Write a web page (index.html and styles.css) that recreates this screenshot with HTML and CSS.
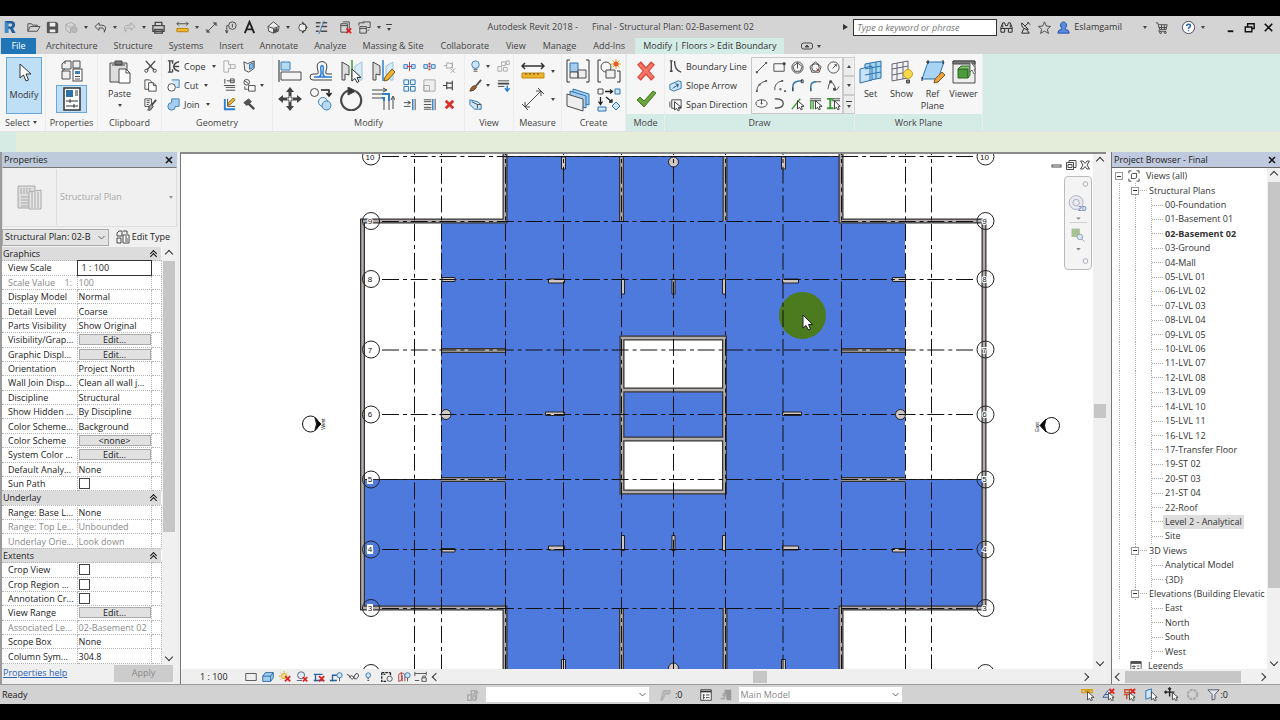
FILE: index.html
```html
<!DOCTYPE html>
<html lang="en">
<head>
<meta charset="utf-8">
<title>Autodesk Revit 2018 - Final - Structural Plan: 02-Basement 02</title>
<link rel="stylesheet" href="styles.css">
</head>
<body>
<div class="app">
<header class="titlebar">
  <svg class="logo" viewBox="0 0 14 16"><path d="M1 1h7q5 0 5 4.500q0 3-2.500 4L13.500 15H9.500L7 10H5v5H1z" fill="#1e5f9e"/><path d="M5 4h3q1.500 0 1.500 1.700T8 7.500H5z" fill="#d4d4d4"/><path d="M1 1l4 3v11H1z" fill="#3f8ccc"/></svg>
  <div class="qat">
    <button class="c" aria-label="Open"><svg viewBox="0 0 16 16"><path d="M2 12V4h4l1 1.500h5V7M2 12l2.500-5H15l-3 5z"/></svg></button>
    <button class="c" aria-label="Save"><svg viewBox="0 0 16 16"><path d="M3 2.500h9l1.500 1.500v9.500h-11v-11z" fill="#555"/><path d="M5 3h6v4H5zM5 10h6v3H5z" fill="#eee" stroke="none"/></svg></button>
    <button class="c dim" aria-label="Synchronize"><svg viewBox="0 0 16 16"><path d="M2 5l5-2.500L12 5v3M2 5v6l5 3V8L2 5M7 8l5-3"/><circle cx="11" cy="10.500" r="3" fill="#bbb"/></svg></button>
    <i class="arr"></i>
    <button class="c" aria-label="Undo"><svg viewBox="0 0 16 16"><path d="M6.500 3L2 7l4.500 4V8.500h3q3 0 2.500 4.500q4-7-2.500-7.500h-3z"/></svg></button><i class="arr"></i>
    <button class="c dim" aria-label="Redo"><svg viewBox="0 0 16 16"><path d="M9.500 3L14 7l-4.500 4V8.500h-3q-3 0-2.500 4.500q-4-7 2.500-7.500h3z"/></svg></button><i class="arr"></i>
    <button class="c" aria-label="Print"><svg viewBox="0 0 16 16"><path d="M4.500 6V2.500h7V6M2 6h12v6H2zM4 10h8v4H4z" stroke-width="1.500"/></svg></button>
    <i class="sep"></i>
    <button class="c" aria-label="Measure"><svg viewBox="0 0 16 16"><path d="M2 4h12M4 2L2 4l2 2M12 2l2 2-2 2"/><path d="M2 9h12v3.500H2z" fill="#f0b429" stroke="#b98514"/></svg></button><i class="arr"></i>
    <button class="c" aria-label="Aligned dimension"><svg viewBox="0 0 16 16"><path d="M3 13L13 3M2 10l4 4M10 2l4 4M3 13l3-.5M3 13l.5-3M13 3l-3 .5M13 3l-.5 3"/></svg></button>
    <button class="c" aria-label="Tag"><svg viewBox="0 0 16 16"><circle cx="10" cy="6" r="4"/><path d="M6 6H4v8M2.500 11L4 14l1.500-3M10 4v4"/></svg></button>
    <button class="c" aria-label="Text"><svg viewBox="0 0 16 16"><path d="M3 14L8 2l5 12M5 10h6" stroke="#222" stroke-width="2"/></svg></button>
    <i class="sep"></i>
    <button class="c" aria-label="3D view"><svg viewBox="0 0 16 16"><path d="M2 7l6-5 6 5-1 5-5 2-5-2zM2 7l6 2 6-2M8 9v5" fill="#eee"/><path d="M9 10l3-1v3l-3 1z" fill="#555"/></svg></button><i class="arr"></i>
    <button class="c" aria-label="Section"><svg viewBox="0 0 16 16"><circle cx="8" cy="8" r="4" fill="#eee"/><path d="M8 2l5 6-5 6V12a4 4 0 0 0 0-8z" fill="#333"/></svg></button>
    <button class="c" aria-label="Thin lines"><svg viewBox="0 0 16 16"><path d="M2 3h5M9 3h5M2 7h4M8 7h6M2 12h3M7 12h7" stroke-width="1.500"/><path d="M11 1L5 15" stroke="#3d7dc8"/></svg></button>
    <i class="sep"></i>
    <button class="c" aria-label="Close hidden"><svg viewBox="0 0 16 16"><path d="M5 2h7v9M3 4h7v9H3zM3 6h7"/><path d="M9 9l5 5M14 9l-5 5" stroke="#d22" stroke-width="2"/></svg></button>
    <button class="c" aria-label="Switch windows"><svg viewBox="0 0 16 16"><path d="M2 6V3h6M6 2h8v6h-3M3 7h7v7H3zM3 9h7M11 12l2-2"/></svg></button><i class="arr"></i>
    <i class="arr bar"></i>
  </div>
  <div class="doc"><span>Autodesk Revit 2018 -</span><span>Final - Structural Plan: 02-Basement 02</span></div>
  <div class="info">
    <i class="play"></i>
    <input class="search" type="text" placeholder="Type a keyword or phrase" aria-label="Search">
    <button class="c" aria-label="Find"><svg viewBox="0 0 16 16"><path d="M2 8l2-5h2l1 3h2l1-3h2l2 5v5h-4V9H6v4H2zM2 9h4M10 9h4M4 5v3M12 5v3" stroke="#222"/></svg></button>
    <button class="c" aria-label="Communication"><svg viewBox="0 0 16 16"><path d="M4 3q-1 7 7 7zM7.500 6.500l4-4M10 2l3 3M6 9.500L4 14h8l-3-4" stroke="#222"/></svg></button>
    <button class="c" aria-label="Favorites"><svg viewBox="0 0 16 16"><path d="M8 2l2 4.500 4.500.3-3.500 3 1.200 4.500L8 11.800l-4.200 2.500L5 9.800l-3.500-3L6 6.500z"/></svg></button>
    <button class="c user" aria-label="Account"><svg viewBox="0 0 16 16"><path d="M2 14q0-4 4-4V9Q4 6 5 4q3-4 6 0 1 2-1 5v1q4 0 4 4z" fill="#5a8ae0" stroke="#1f4fa8"/></svg></button>
    <button class="name">Eslamgamil</button><i class="arr"></i>
    <button class="c cart" aria-label="Store"><svg viewBox="0 0 16 16"><path d="M2 3h2l2 7h7l1-5H5M8 5v5M11 5v5M5 8h8M6 10l-1 2h8"/><circle cx="7" cy="13.500" r="1"/><circle cx="12" cy="13.500" r="1"/></svg></button>
    <i class="sep"></i>
    <button class="c" aria-label="Help"><svg viewBox="0 0 16 16"><circle cx="8" cy="8" r="6.500" fill="#fff" stroke="#445"/><path d="M6 6.500Q6 4.500 8 4.500t2 1.800q0 1-1.500 1.700L8 9.500M8 11v1" stroke="#1d62b8" stroke-width="1.500"/></svg></button><i class="arr"></i>
    <span class="winbtns">
      <button class="c" aria-label="Minimize"><svg viewBox="0 0 16 16"><path d="M5 12h6" stroke="#111" stroke-width="2"/></svg></button>
      <button class="c" aria-label="Restore"><svg viewBox="0 0 16 16"><path d="M6 7V4h7v5h-2M3.500 7.500h7v5h-7z" stroke="#111" stroke-width="1.500"/></svg></button>
      <button class="c" aria-label="Close"><svg viewBox="0 0 16 16"><path d="M4 4l8 8M12 4l-8 8" stroke="#111" stroke-width="1.700"/></svg></button>
    </span>
  </div>
</header>

<nav class="tabs">
  <button class="file">File</button><button>Architecture</button><button>Structure</button><button>Systems</button><button>Insert</button><button>Annotate</button><button>Analyze</button><button>Massing &amp; Site</button><button class="wide">Collaborate</button><button>View</button><button class="wide">Manage</button><button>Add-Ins</button><button class="active">Modify | Floors &gt; Edit Boundary</button>
  <button class="toggle" aria-label="Minimize ribbon"><svg viewBox="0 0 14 8"><rect x="1.500" y="1" width="11" height="6" rx="2"/><path d="M5 5l2-2 2 2z" fill="#444"/></svg><i class="arr"></i></button>
</nav>

<section class="ribbon">
  <div class="panel p-select">
    <div class="body"><button class="tall on"><svg class="i24" viewBox="0 0 24 24"><path d="M8 3v14l3.500-3 2.500 6 2.500-1-2.500-6H19z" fill="#fff" stroke="#333"/></svg><span>Modify</span></button></div>
    <div class="cap">Select <i class="arr"></i></div>
  </div>
  <div class="panel p-prop">
    <div class="body two">
      <button class="big" aria-label="Type properties"><svg class="i24" viewBox="0 0 24 24"><path d="M2 5l3-3h6v8H2zM13 2h7v7h-7zM5 2v3M2 12h8v8H2zM2 12l3-2" fill="#eee"/><rect x="13" y="10" width="9" height="12" fill="#fff"/><path d="M15 12h5v3h-5z" fill="#3d7fb8" stroke="none"/><path d="M15 17.500h5M15 20h5"/></svg></button>
      <button class="big on" aria-label="Properties"><svg class="i24" viewBox="0 0 24 24"><rect x="4" y="1" width="16" height="22" fill="#fff" stroke="#333" stroke-width="1.500"/><path d="M6 3h7v7H6z" fill="#2c72ad" stroke="none"/><path d="M15 4h3M15 6h3M15 8h3M6 14h12M10 12v4M6 19h12M14 17v4" stroke="#333"/></svg></button>
    </div>
    <div class="cap">Properties</div>
  </div>
  <div class="panel p-clip">
    <div class="body">
      <button class="tall"><svg class="i24" viewBox="0 0 24 24"><path d="M2 3h17v19H2z" fill="#ddd"/><path d="M7 1h7v4H7zM4 5h13" fill="#777"/><path d="M11 9h7l4 4v10H11z" fill="#fff"/><path d="M18 9v4h4"/></svg><span>Paste</span><i class="arr"></i></button>
      <div class="col">
        <button class="s" aria-label="Cut to clipboard"><svg viewBox="0 0 16 16"><path d="M3 2l9 10M13 2L4 12" stroke-width="1.500"/><circle cx="3.500" cy="12.500" r="1.700"/><circle cx="12.500" cy="12.500" r="1.700"/></svg></button>
        <button class="s" aria-label="Copy to clipboard"><svg viewBox="0 0 16 16"><path d="M2 2h5l2 2v8H2z"/><path d="M6 5h5l3 3v6H6z" fill="#fff"/><path d="M11 5v3h3"/></svg></button>
        <button class="s" aria-label="Match type"><svg viewBox="0 0 16 16"><path d="M2 2h7v8H2zM4 4h3M4 6h3M4 8h2"/><path d="M14 3L9 9" stroke-width="2"/><path d="M9 8l2 2-3 4-3 0q2-2 1-4z" fill="#999"/></svg></button>
      </div>
    </div>
    <div class="cap">Clipboard</div>
  </div>
  <div class="panel p-geo">
    <div class="body">
      <div class="col cmd">
        <button><svg viewBox="0 0 16 16"><path d="M2 2h6M2 14h5M4 2v12M7 2v3M7 11v3M14 3q-5 1-6 5 1 4 6 5M9 8h5" stroke-width="1.500"/></svg><span>Cope</span><i class="arr"></i></button>
        <button><svg viewBox="0 0 16 16"><path d="M6 2h8v8h-3" fill="#cfe6f8" stroke="#3d7fb8"/><circle cx="6" cy="10" r="4" fill="#fff"/></svg><span>Cut</span><i class="arr"></i></button>
        <button><svg viewBox="0 0 16 16"><path d="M6 2h8v8h-4a4 4 0 1 1-4-4z" fill="#a5cdf0" stroke="#3d7fb8"/></svg><span>Join</span><i class="arr"></i></button>
      </div>
      <div class="col">
        <button class="s dim" aria-label="Join roof"><svg viewBox="0 0 16 16"><path d="M2 2h5v4h7v4H7v4H2zM9 6v4"/></svg></button>
        <button class="s" aria-label="Beam joins"><svg viewBox="0 0 16 16"><path d="M3 1v5M5 3h8M9 1h4v4H9zM2 8h12M4 10h10M4 13h10" /></svg></button>
        <button class="s" aria-label="Wall joins"><svg viewBox="0 0 16 16"><path d="M3 2v11h11" stroke="#2c7fd0" stroke-width="2"/><path d="M6 2v8h8"/><path d="M6 9l1-3 5-5 2 2-5 5z" fill="#f0b429" stroke="#8a6a20"/></svg></button>
      </div>
      <div class="col w3">
        <button class="s" aria-label="Split face"><svg viewBox="0 0 16 16"><path d="M2 3l4 2 7-3v8l-6 4-4-2z" fill="#eee"/><path d="M8 6l4-2v5l-4 2z" fill="#8bbce8" stroke="#2c72ad"/></svg></button>
        <button class="s" aria-label="Paint"><svg viewBox="0 0 16 16"><circle cx="5" cy="4.500" r="3"/><path d="M3 3l4 3M7 8h7v6H7zM3 9v3h3"/></svg><i class="arr"></i></button>
        <button class="s" aria-label="Demolish"><svg viewBox="0 0 16 16"><path d="M7 7l6 6" stroke-width="2.500"/><path d="M2 6l5-4 3 3-5 4z" fill="#555"/></svg></button>
      </div>
    </div>
    <div class="cap">Geometry</div>
  </div>
  <div class="panel p-mod">
    <div class="body">
      <div class="grid4">
        <button class="big" aria-label="Align"><svg class="i24" viewBox="0 0 24 24"><path d="M1 1v22" stroke="#222"/><path d="M3 3h9v8H3z" fill="#b5dbf3" stroke="#3d7fb8"/><path d="M3 13h20v8H3z" fill="#f4f4f4"/></svg></button>
        <button class="big" aria-label="Offset"><svg class="i24" viewBox="0 0 24 24"><path d="M23 21H4q-3 0-3-3t3-3h4q2 0 1-3-3-9 4-9.500 7 .5 4 9.500-1 3 1 3h5" stroke="#444"/><path d="M23 18H5M8 18q5 0 4-6-1-5 1-5.500 2 .5 1 5.500-1 6 4 6" stroke="#2c7fd0" stroke-width="1.500"/></svg></button>
        <button class="big" aria-label="Mirror pick axis"><svg class="i24" viewBox="0 0 24 24"><path d="M2 3l7 4v9l-4-1v6H2z" fill="#ddd"/><path d="M22 3l-7 4v9l4-1v6h3z" fill="#d8ecf8" stroke="#9cc4dc"/><path d="M12 1v21" stroke="#3d9b35" stroke-width="1.500"/><path d="M12 10v12l3-2.500 2 4 2-1-2-4h4z" fill="#fff" stroke="#333"/></svg></button>
        <button class="big" aria-label="Mirror draw axis"><svg class="i24" viewBox="0 0 24 24"><path d="M2 3l7 4v9l-4-1v6H2z" fill="#ddd"/><path d="M22 3l-7 4v9l4-1v6h3z" fill="#d8ecf8" stroke="#9cc4dc"/><path d="M12 1v21" stroke="#2c7fd0" stroke-width="1.500"/><path d="M13 22l1-4 7-8 3 3-7 8z" fill="#f0b429" stroke="#7a5a20"/></svg></button>
        <button class="big" aria-label="Move"><svg class="i24" viewBox="0 0 24 24"><path d="M12 0l4 5h-2.500v4h-3V5H8zM12 24l4-5h-2.500v-4h-3v4H8zM0 12l5-4v2.500h4v3H5V16zM24 12l-5-4v2.500h-4v3h4V16z" fill="#444" stroke="none"/><path d="M10 10h4v4h-4z" fill="#fff"/></svg></button>
        <button class="big" aria-label="Copy"><svg class="i24" viewBox="0 0 24 24"><circle cx="5.500" cy="5.500" r="4"/><path d="M12 3h8v5M17.500 6l2.500 3 2.500-3" stroke="#222" stroke-width="1.500"/><circle cx="14" cy="15" r="4.500" fill="#e4f1fa" stroke="#3d7fb8"/><circle cx="17.500" cy="18.500" r="4.500" fill="#b5dbf3" stroke="#3d7fb8"/></svg></button>
        <button class="big" aria-label="Rotate"><svg class="i24" viewBox="0 0 24 24"><path d="M16 4.500A10 10 0 1 1 9 3.500" stroke-width="2.200"/><path d="M8 0l8 4-8 4z" fill="#333"/></svg></button>
        <button class="big" aria-label="Trim"><svg class="i24" viewBox="0 0 24 24"><path d="M1 3h14M12 1l4 2-4 2M22 22V10M20 13l2-4 2 4M1 7h10M1 11h10M13 23v-9M18 23v-9"/><path d="M11 7h7v7M11 11h2v3" stroke="#2c7fd0" stroke-width="2"/></svg></button>
      </div>
      <div class="grid3">
        <button class="s" aria-label="Split"><svg viewBox="0 0 16 16"><path d="M2 6h4v4H2zM10 6h4v4h-4z" fill="#cfe6f8" stroke="#2c7fd0"/><path d="M8 3v10M5 8h6" stroke="#c33"/></svg></button>
        <button class="s" aria-label="Split with gap"><svg viewBox="0 0 16 16"><path d="M2 6h4v4H2zM10 6h4v4h-4z" fill="#cfe6f8" stroke="#2c7fd0"/><path d="M8 4v2M8 7v2M8 10v2" stroke="#c33" stroke-width="2"/></svg></button>
        <button class="s dim" aria-label="Unpin"><svg viewBox="0 0 16 16"><path d="M2 7h3V4l6 1v4l-6 1V7M11 3v7M9 10l5 5M14 10l-5 5"/></svg></button>
        <button class="s" aria-label="Array"><svg viewBox="0 0 16 16"><path d="M2 2h5v5H2zM9 2h5v5H9zM2 9h5v5H2zM9 9h5v5H9z" fill="#e4f1fa" stroke="#2c72ad"/></svg></button>
        <button class="s dim" aria-label="Scale"><svg viewBox="0 0 16 16"><path d="M2 2h12v12H2zM2 8h6v6H2z" fill="#eee"/></svg></button>
        <button class="s" aria-label="Pin"><svg viewBox="0 0 16 16"><path d="M1 8h4M5 4v8M5 5.500h6v5H5M11 3v10" stroke-width="1.300"/></svg></button>
        <button class="s" aria-label="Trim single"><svg viewBox="0 0 16 16"><path d="M2 6h7M2 10h7M6 4l3 2-3 2M14 2v12"/><path d="M11.500 2v12" stroke="#2c7fd0" stroke-width="1.500"/></svg></button>
        <button class="s" aria-label="Trim multiple"><svg viewBox="0 0 16 16"><path d="M2 3h8M2 5h8M2 8h8M2 11h8M2 13h8M14 2v12"/><path d="M11.500 2v12" stroke="#2c7fd0" stroke-width="1.500"/></svg></button>
        <button class="s" aria-label="Delete"><svg viewBox="0 0 16 16"><path d="M4 4l8 8M12 4l-8 8" stroke="#d8302a" stroke-width="3"/></svg></button>
      </div>
    </div>
    <div class="cap">Modify</div>
  </div>
  <div class="panel p-view">
    <div class="body">
      <div class="col w28">
        <button class="s" aria-label="Hide"><svg viewBox="0 0 16 16"><circle cx="8" cy="6" r="4" fill="#cfe6f8" stroke="#3d7fb8"/><path d="M6 11h4M6 13h4"/></svg><i class="arr"></i></button>
        <button class="s" aria-label="Override"><svg viewBox="0 0 16 16"><path d="M14 2L8 9" stroke="#555" stroke-width="2"/><path d="M2 14q1-5 5-6l2 2q-2 4-7 4z" fill="#9a6232" stroke="#6b4020"/></svg><i class="arr"></i></button>
        <button class="s" aria-label="Selection box"><svg viewBox="0 0 16 16"><path d="M2 3l8 2 4 3v5l-7 0-5-5z" fill="#cfe6f8" stroke="#2c72ad"/><path d="M4 5l6 3v4M10 8l4 0"/></svg></button>
      </div>
      <div class="col">
        <button class="s dim" aria-label="Displace"><svg viewBox="0 0 16 16"><path d="M2 8h4v5H2zM8 9h4v4H8zM6 3h4v4H6zM11 2h3v4h-3z"/></svg></button>
        <button class="s" aria-label="Linework"><svg viewBox="0 0 16 16"><path d="M2 3h12"/><path d="M2 6h12" stroke-width="2"/><path d="M2 9h7" stroke-width="1"/><path d="M12 8v5M9.500 11l2.500 3 2.500-3" stroke="#2c7fd0" stroke-width="1.500"/></svg></button>
        <span></span>
      </div>
    </div>
    <div class="cap">View</div>
  </div>
  <div class="panel p-meas">
    <div class="body two">
      <button class="big" aria-label="Measure"><svg class="i24" viewBox="0 0 24 24"><path d="M1 7h22M4 4L1 7l3 3M20 4l3 3-3 3" stroke="#333" stroke-width="1.500"/><path d="M1 14h22v5H1z" fill="#f0b429" stroke="#c08a15"/><path d="M5 14v2M9 14v2M13 14v2M17 14v2"/></svg><i class="arr"></i></button>
      <button class="big" aria-label="Dimension"><svg class="i24" viewBox="0 0 24 24"><path d="M4 20L20 4M1 17l6 6M17 1l6 6M4 20v-5M4 20h5M20 4v5M20 4h-5"/></svg><i class="arr"></i></button>
    </div>
    <div class="cap">Measure</div>
  </div>
  <div class="panel p-create">
    <div class="body grid2">
      <button class="big" aria-label="Create assembly"><svg class="i24" viewBox="0 0 24 24"><path d="M4 1H1v22h3M20 1h3v22h-3" stroke="#333"/><path d="M4 4h8v9H4z" fill="#a5cdf0" stroke="#2c72ad"/><path d="M4 13h8v6H4zM12 11h8v8h-8z" fill="#eee"/></svg></button>
      <button class="big" aria-label="Create group"><svg class="i24" viewBox="0 0 24 24"><path d="M4 1H1v22h3M20 12h3v11h-3" stroke="#333"/><circle cx="9" cy="8" r="5"/><path d="M9 11h9v8H9z" fill="#eee"/><path d="M19 0v10M14 5h10M15.500 1.500l7 7M22.500 1.500l-7 7" stroke="#e8a020"/><circle cx="19" cy="5" r="2.500" fill="#e85a20" stroke="none"/></svg></button>
      <button class="big" aria-label="Create parts"><svg class="i24" viewBox="0 0 24 24"><path d="M7 1l16 5v11l-16-5z" fill="#a5cdf0" stroke="#2c72ad"/><path d="M4 3l16 5v12L4 15z" fill="#a5cdf0" stroke="#2c72ad"/><path d="M1 6l16 5v12L1 18z" fill="#eee"/></svg></button>
      <button class="big" aria-label="Create similar"><svg class="i24" viewBox="0 0 24 24"><path d="M1 1h5v5H1z"/><path d="M8 3.500h7M13 1.500l2.500 2-2.500 2M3.500 9v7M1.500 13.500l2 3 2-3M9 9l6 5M15 11v3h-3" stroke="#222" stroke-width="1.300"/><path d="M18 1h5v5h-5zM1 19h8v4H1zM19 14l4 4-4 4-4-4z" fill="#cfe6f8" stroke="#2c72ad"/></svg></button>
    </div>
    <div class="cap">Create</div>
  </div>
  <div class="panel p-mode ctx">
    <div class="body two">
      <button class="big" aria-label="Cancel edit mode"><svg class="i24" viewBox="0 0 24 24"><path d="M5 4l14 16M19 4L5 20" stroke="#d9402f" stroke-width="5"/><path d="M5.500 5l13 14M18.500 5l-13 14" stroke="#f4776a" stroke-width="3"/></svg></button>
      <button class="big" aria-label="Finish edit mode"><svg class="i24" viewBox="0 0 24 24"><path d="M3 13l3-3 4 4L19 4l3 2-12 14z" fill="#6aa53c" stroke="#3f7a22"/></svg></button>
    </div>
    <div class="cap">Mode</div>
  </div>
  <div class="panel p-draw ctx">
    <div class="body">
      <div class="col cmd">
        <button><svg viewBox="0 0 16 16"><path d="M2 2h3M3.500 2v11M2 13h3M7 2q0 10 7 12" stroke-width="1.500"/></svg><span>Boundary Line</span></button>
        <button><svg viewBox="0 0 16 16"><path d="M2 7l9-4 3 1v7l-8 3-4-2z" fill="#cfe6f8" stroke="#2c72ad"/><path d="M5 11l6-4M8 6l3 1-1 3" stroke="#174f80"/></svg><span>Slope Arrow</span></button>
        <button><svg viewBox="0 0 16 16"><path d="M4 3h10v9H4zM2 5v6"/><path d="M7 5v9l2-2 2 3 1-1-1-3h3z" fill="#fff" stroke="#333"/></svg><span>Span Direction</span></button>
      </div>
      <div class="gallery">
        <button aria-label="Line"><svg viewBox="0 0 16 16"><path d="M3 13L13 3"/><path d="M2 13h2M12 3h2" stroke-width="2"/></svg></button>
        <button aria-label="Rectangle"><svg viewBox="0 0 16 16"><path d="M2 4h11v8H2z"/><path d="M12 3h2v2h-2z" fill="#333"/></svg></button>
        <button aria-label="Inscribed polygon"><svg viewBox="0 0 16 16"><circle cx="8" cy="8" r="6"/><path d="M8 3l5 4-2 5H5L3 7zM8 3v6"/></svg></button>
        <button aria-label="Circumscribed polygon"><svg viewBox="0 0 16 16"><path d="M8 2l6 5-2 6H4L2 7z"/><circle cx="8" cy="8" r="4"/><path d="M9 9l3 3" stroke="#c33"/></svg></button>
        <button aria-label="Circle"><svg viewBox="0 0 16 16"><circle cx="8" cy="8" r="6"/><path d="M7 9l4-4M9 5h2v2"/></svg></button>
        <button aria-label="Start-end-radius arc"><svg viewBox="0 0 16 16"><path d="M3 14Q3 6 13 3"/><path d="M2 13h2v2H2zM12 2h2v2h-2zM5 6h2v2H5z" fill="#555" stroke="none"/></svg></button>
        <button aria-label="Center-ends arc"><svg viewBox="0 0 16 16"><path d="M3 13Q2 5 11 3"/><path d="M10 2h2v2h-2zM8 11h2v2H8zM13 13h2v2h-2z" fill="#555" stroke="none"/></svg></button>
        <button aria-label="Tangent arc"><svg viewBox="0 0 16 16"><path d="M3 14V9q0-6 10-6" stroke="#2c72ad" stroke-width="1.500"/><path d="M3 14v-4M12 2h2v3h-2z" stroke="#333"/></svg></button>
        <button aria-label="Fillet arc"><svg viewBox="0 0 16 16"><path d="M3 14V9q0-5 6-5" stroke="#2c72ad" stroke-width="1.500"/><path d="M9 4h5M3 14v-3"/></svg></button>
        <button aria-label="Spline"><svg viewBox="0 0 16 16"><path d="M2 12Q4 1 7 5t3 7 4-3"/><path d="M4 3h2v2H4zM8 11h2v2H8z" fill="#555"/></svg></button>
        <button aria-label="Ellipse"><svg viewBox="0 0 16 16"><ellipse cx="8" cy="8" rx="6" ry="4"/><path d="M8 4v5M7 8h2"/></svg></button>
        <button aria-label="Partial ellipse"><svg viewBox="0 0 16 16"><path d="M4 3q8 0 8 5t-9 5M3 3h3M3 13h2" stroke-width="1.300"/></svg></button>
        <button aria-label="Pick lines"><svg viewBox="0 0 16 16"><path d="M2 14L11 3" stroke="#3d9b35" stroke-width="1.500"/><path d="M8 5v9l2-2 2 3 1-1-1-3h3z" fill="#fff" stroke="#333"/></svg></button>
        <button aria-label="Pick walls"><svg viewBox="0 0 16 16"><path d="M2 3h12M2 5h12"/><path d="M3 5v9M5.500 5v9" stroke="#3d9b35" stroke-width="1.500"/><path d="M8 5v9l2-2 2 3 1-1-1-3h3z" fill="#fff" stroke="#333"/></svg></button>
        <button aria-label="Pick supports"><svg viewBox="0 0 16 16"><path d="M6 3h9M6 5h9"/><path d="M1 3h7M4.500 3v10M1 13h7" stroke="#3d9b35" stroke-width="2"/><path d="M9 5v9l2-2 2 3 1-1-1-3h2z" fill="#fff" stroke="#333"/></svg></button>
      </div>
      <div class="spin"><button aria-label="Up"><i class="arr up"></i></button><button aria-label="Down"><i class="arr"></i></button><button aria-label="More"><i class="arr bar"></i></button></div>
    </div>
    <div class="cap">Draw</div>
  </div>
  <div class="panel p-work ctx">
    <div class="body">
      <button class="tall"><svg class="i24" viewBox="0 0 24 24"><path d="M6 4l16-3v17L6 21z" fill="#a5d4ee" stroke="#2c72ad"/><path d="M1 9l12-3v14L1 23z" fill="#c7e3f5" stroke="#2c72ad"/><path d="M11 3v17M17 2v17M6 9l16-3M6 15l16-3" stroke="#2c72ad"/></svg><span>Set</span></button>
      <button class="tall"><svg class="i24" viewBox="0 0 24 24"><path d="M2 4l16-3v17L2 21zM7 3v17M13 2v17M2 9l16-3M2 15l16-3" fill="#f2f2f4" stroke="#667"/><circle cx="18" cy="14" r="4.500" fill="#f8d94a" stroke="#c9a020"/><path d="M16.500 20h3v3h-3z" fill="#888"/></svg><span>Show</span></button>
      <button class="tall"><svg class="i24" viewBox="0 0 24 24"><path d="M7 2h16l-6 17H1z" fill="#a9d3f2" stroke="#2c72ad"/><path d="M5 2h3M7 0v4M22 0v4M1 17v4" stroke="#222"/><path d="M13 23l1-4 7-7 3 3-7 7z" fill="#f0a040" stroke="#7a5a20"/></svg><span>Ref<br>Plane</span></button>
      <button class="tall"><svg class="i24" viewBox="0 0 24 24"><path d="M1 1h22v22H1z" fill="#eee"/><path d="M1 1h22v3H1z" fill="#777"/><path d="M6 9h10v9H6z" fill="#4b9a3a" stroke="#2e6a22"/><path d="M6 9l3-3h9v9l-2 3V9z" fill="#86c070" stroke="#2e6a22"/><path d="M18 1v11l2-2 2 4 1.500-1-1.500-4h2z" fill="#fff" stroke="#666"/></svg><span>Viewer</span></button>
    </div>
    <div class="cap">Work Plane</div>
  </div>
</section>
<div class="options"></div>

<main class="work">
  <aside class="props">
    <h2>Properties <button class="x" aria-label="Close properties"><svg viewBox="0 0 8 8"><path d="M1 1l6 6M7 1L1 7"/></svg></button></h2>
    <div class="ptype">
      <span class="thumb"><svg viewBox="0 0 26 26"><path d="M1 2h17v22H1z" fill="#ddd" stroke="#aaa"/><path d="M4 4v6M7 4v6M10 4v6M13 4v6M4 13h9M4 16h9M4 19h9M4 22h9" stroke="#aaa"/><path d="M12 8l12-2v19H12z" fill="#e6e6e6" stroke="#aaa"/><path d="M15 8v16M18 8v16M21 8v16" stroke="#aaa"/></svg></span>
      <span>Structural Plan</span><i class="arr"></i>
    </div>
    <div class="inst"><select aria-label="Instance"><option>Structural Plan: 02-B</option></select><button><svg viewBox="0 0 14 14"><path d="M1 3l2-2h3v5H1zM7 1h4v3M1 8h4v5H1z"/><path d="M7 5h6v8H7zM9 7h2M9 9h3M9 11h3" fill="#fff"/></svg>Edit Type</button></div>
    <div class="pbody">
      <table>
        <colgroup><col class="c1"><col class="c2"><col class="c3"></colgroup>
        <tr class="h"><th colspan="3">Graphics <b></b></th></tr>
        <tr><td>View Scale</td><td class="box">1 : 100</td><td></td></tr>
        <tr class="off"><td>Scale Value &nbsp;&nbsp; 1:</td><td>100</td><td></td></tr>
        <tr><td>Display Model</td><td>Normal</td><td></td></tr>
        <tr><td>Detail Level</td><td>Coarse</td><td></td></tr>
        <tr><td>Parts Visibility</td><td>Show Original</td><td></td></tr>
        <tr><td>Visibility/Grap...</td><td><button>Edit...</button></td><td></td></tr>
        <tr><td>Graphic Displ...</td><td><button>Edit...</button></td><td></td></tr>
        <tr><td>Orientation</td><td>Project North</td><td></td></tr>
        <tr><td>Wall Join Disp...</td><td>Clean all wall j...</td><td></td></tr>
        <tr><td>Discipline</td><td>Structural</td><td></td></tr>
        <tr><td>Show Hidden ...</td><td>By Discipline</td><td></td></tr>
        <tr><td>Color Scheme...</td><td>Background</td><td></td></tr>
        <tr><td>Color Scheme</td><td><button>&lt;none&gt;</button></td><td></td></tr>
        <tr><td>System Color ...</td><td><button>Edit...</button></td><td></td></tr>
        <tr><td>Default Analy...</td><td>None</td><td></td></tr>
        <tr><td><label for="sun">Sun Path</label></td><td><input type="checkbox" id="sun"></td><td></td></tr>
        <tr class="h"><th colspan="3">Underlay <b></b></th></tr>
        <tr><td>Range: Base L...</td><td>None</td><td></td></tr>
        <tr class="off"><td>Range: Top Le...</td><td>Unbounded</td><td></td></tr>
        <tr class="off"><td>Underlay Orie...</td><td>Look down</td><td></td></tr>
        <tr class="h"><th colspan="3">Extents <b></b></th></tr>
        <tr><td><label for="cv">Crop View</label></td><td><input type="checkbox" id="cv"></td><td></td></tr>
        <tr><td><label for="cr">Crop Region ...</label></td><td><input type="checkbox" id="cr"></td><td></td></tr>
        <tr><td><label for="ac">Annotation Cr...</label></td><td><input type="checkbox" id="ac"></td><td></td></tr>
        <tr><td>View Range</td><td><button>Edit...</button></td><td></td></tr>
        <tr class="off"><td>Associated Le...</td><td>02-Basement 02</td><td></td></tr>
        <tr><td>Scope Box</td><td>None</td><td></td></tr>
        <tr><td>Column Sym...</td><td>304.8</td><td></td></tr>
      </table>
      <div class="vs"><i class="ch u"></i><i class="thumbv t1"></i><i class="ch d"></i></div>
    </div>
    <div class="pfoot"><a href="#help">Properties help</a><button disabled>Apply</button></div>
  </aside>

  <section class="canvas">
    <div class="stage">
      <div class="view">
      <svg class="plan" viewBox="181 154 912 515" preserveAspectRatio="xMidYMid slice">
        <defs>
          <path id="walls" d="M505 150V221H362.500V608H505V680M841 150V221H984V608H841V680M621.500 157V221M725 157V221M621.500 608V680M725 608V680M441 350.500H505M441 479.500H505M841 350.500H905M841 479.500H905M622 338H724.500V492H622zM622 390H724.500M622 439H724.500"/>
          <g id="end"><circle r="8.500"/></g>
        </defs>
        <path fill="#4f7add" d="M505 157H841V221H905V479H983V608H841V680H505V608H363V479H441V221H505z"/>
        <path fill="#fff" d="M622 338H724V390H622zM622 439H724V492H622z"/>
        <path class="thin" d="M505 156.500H841M364 479.500H441M905 479.500H983"/>
        <circle cx="802.500" cy="315.500" r="23.500" fill="#4b7a1f"/>
        <use href="#walls" class="w1"/><use href="#walls" class="w2"/>
        <g class="cols">
          <path d="M442 277.500h13v4h-13zM548.500 279h16v4h-16zM782.500 279h16v4h-16zM892.500 277.500h13v4h-13zM621.500 279h3v15h-3zM672 279h3v15h-3zM722.500 279h3v15h-3zM561.500 157h4v12h-4zM781.500 157h4v12h-4zM545.500 412h19v3.500h-19zM782.500 412h19v3.500h-19zM442 548.500h13v3.500h-13zM548.500 546h16v4h-16zM782.500 546h16v4h-16zM892.500 548.500h13v3.500h-13zM621.500 535.500h3v15h-3zM672 535.500h3v15h-3zM722.500 535.500h3v15h-3zM561.500 659.500h4v12h-4zM781.500 659.500h4v12h-4z"/>
          <circle cx="673.500" cy="162" r="5"/><circle cx="446" cy="414.500" r="5"/><circle cx="900.500" cy="414.500" r="5"/><circle cx="673.500" cy="668" r="5"/>
        </g>
        <path class="axis" d="M414.500 138V690M441.500 138V690M505.500 138V690M563.500 138V690M621.500 138V690M673.500 138V690M725.500 138V690M783 138V690M841.500 138V690M905.500 138V690M931.500 138V690M382 156.500H977M382 221.500H977M382 279.500H977M382 350H977M382 414.500H977M382 479.500H977M382 549.500H977M382 608.500H977"/>
        <g class="bubbles">
          <use href="#end" x="371" y="156.500"/><use href="#end" x="371" y="221"/><use href="#end" x="371" y="279"/><use href="#end" x="371" y="349.500"/><use href="#end" x="371" y="414.500"/><use href="#end" x="371" y="479.500"/><use href="#end" x="371" y="549.500"/><use href="#end" x="371" y="608"/><use href="#end" x="371" y="673"/>
          <use href="#end" x="985.500" y="156.500"/><use href="#end" x="985.500" y="221"/><use href="#end" x="985.500" y="279"/><use href="#end" x="985.500" y="349.500"/><use href="#end" x="985.500" y="414.500"/><use href="#end" x="985.500" y="479.500"/><use href="#end" x="985.500" y="549.500"/><use href="#end" x="985.500" y="608"/><use href="#end" x="985.500" y="673"/>
        </g>
        <path fill="#fff" d="M367 475h6v9h-6zM367 545h6v9h-6zM367 604h6v8h-6z"/>
        <g class="nums">
          <text x="370" y="160">10</text><text x="370" y="224">9</text><text x="370" y="282">8</text><text x="370" y="353">7</text><text x="370" y="417">6</text><text x="370" y="482">5</text><text x="370" y="552">4</text><text x="370" y="611">3</text>
          <text x="984.500" y="160">10</text><text x="984.500" y="224">9</text><text x="984.500" y="282">8</text><text x="984.500" y="353">7</text><text x="984.500" y="417">6</text><text x="984.500" y="482">5</text><text x="984.500" y="552">4</text><text x="984.500" y="611">3</text>
        </g>
        <g class="elev">
          <path d="M315 418l6 6-6 6q3-6 0-12zM1046 419l-6 6.500 6 6.500q-3-6.500 0-13z" fill="#000"/><circle cx="310.500" cy="424" r="8"/><circle cx="1051.500" cy="425.500" r="8"/>
          <text transform="translate(325 424) rotate(-90)">West</text><text transform="translate(1039 427) rotate(-90)">East</text>
        </g>
        <path d="M803 315v13l3-2.500 2.500 4.500 2-1-2-4.500h4z" fill="#fff" stroke="#222"/>
      </svg>
      <div class="mdi"><button aria-label="Minimize view"><svg viewBox="0 0 12 12"><rect x="1" y="6" width="9" height="2"/></svg></button><button aria-label="Restore view"><svg viewBox="0 0 12 12"><path d="M4 3V1.500h7v7H9M1.500 3.500h7v7h-7zM3 5.500h4v3H3z"/></svg></button><button aria-label="Close view"><svg viewBox="0 0 12 12"><path d="M1.500 2h2.500l2 2.500L8 2h2.500L8 6l2.500 4H8L6 7.500 4 10H1.500L4 6z"/></svg></button></div>
      <div class="nav"><svg viewBox="0 0 28 94"><g fill="none" stroke="#aab"><circle cx="22" cy="5" r="2.500"/><circle cx="22" cy="88" r="2.500"/><path d="M5 46.500h19" stroke="#ccc"/><circle cx="12" cy="25" r="7.500" fill="#e9ebf2"/><circle cx="12" cy="25" r="3.500"/></g><path d="M7 53h9v9H7z" fill="#a8c296"/><circle cx="16" cy="62" r="3" fill="#dde7f2" stroke="#8fa0b8"/><path d="M18 64l3 3" stroke="#8fa0b8"/><path d="M12 41h5l-2.500 2.500zM12 74h5l-2.500 2.500z" fill="#888"/><text x="14" y="34">2D</text></svg></div>
      </div>
      <div class="vs wide"><i class="ch u"></i><i class="thumbv t2"></i><i class="ch d"></i></div>
    </div>
    <div class="viewbar">
      <span class="scale">1 : 100</span>
      <button class="v" aria-label="Detail level"><svg viewBox="0 0 16 16"><path d="M2 4h12v8H2z"/></svg></button>
      <button class="v" aria-label="Visual style"><svg viewBox="0 0 16 16"><path d="M2 7l3-4h9v6l-3 4H2zM2 7h9v6M11 7l3-4" fill="#a5d0f2" stroke="#1f5f9e"/></svg></button>
      <button class="v" aria-label="Sun path off"><svg viewBox="0 0 16 16"><circle cx="7" cy="7" r="3" fill="#ffe48a" stroke="#d49a20"/><path d="M7 1v2M1 7h2M3 3l1 1M11 3l-1 1M3 11l1-1" stroke="#d49a20"/><path d="M8 7l6 6M14 7l-6 6" stroke="#d22" stroke-width="2"/></svg></button>
      <button class="v" aria-label="Shadows off"><svg viewBox="0 0 16 16"><circle cx="7" cy="6" r="4" fill="#dcecf8" stroke="#557"/><path d="M2 12h6" stroke="#557"/><path d="M9 8l5 5M14 8l-5 5" stroke="#d22" stroke-width="2"/></svg></button>
      <button class="v" aria-label="Crop view"><svg viewBox="0 0 16 16"><path d="M2 5h10M4 5v8M2 12h10" stroke="#2c5f9e" stroke-width="1.500"/><path d="M8 7l6 6M14 7l-6 6" stroke="#d22" stroke-width="2"/></svg></button>
      <button class="v" aria-label="Show crop region"><svg viewBox="0 0 16 16"><path d="M1 12h8M4 5v8M4 6h5" stroke="#2c5f9e" stroke-width="1.500"/><circle cx="12" cy="6" r="3" fill="#cfe6f8" stroke="#2c72ad"/><path d="M12 9v4"/></svg></button>
      <button class="v" aria-label="Temporary hide"><svg viewBox="0 0 16 16"><path d="M1 5q3 0 4 4 3 3 4-1-3-3-5 0M9 8q2-5 4-4 3 3-1 6-3 1-3-2" stroke="#333"/></svg></button>
      <button class="v" aria-label="Reveal hidden"><svg viewBox="0 0 16 16"><circle cx="6" cy="6" r="2.700" fill="#cfe6f8" stroke="#2c72ad"/><path d="M5 10h2M5 12h2"/></svg></button>
      <button class="v" aria-label="View properties"><svg viewBox="0 0 16 16"><path d="M2 3h10M2 3v10h6M4 5h2M12 3v4" stroke="#222" stroke-width="1.500" stroke-dasharray="3 1"/><circle cx="11" cy="10" r="3" fill="#eee"/></svg></button>
      <button class="v" aria-label="Analytical model"><svg viewBox="0 0 16 16"><path d="M2 5l3-2v9l-3 1zM5 3l4 2v8M6 6v7" stroke="#a33" fill="#eee"/><circle cx="12" cy="6" r="3" fill="#cfe6f8" stroke="#2c72ad"/><path d="M12 9v4"/></svg></button>
      <button class="v" aria-label="Reveal constraints"><svg viewBox="0 0 16 16"><path d="M1 4h13M1 2v5M14 2v4M1 12h5M9 9h5v4H9zM10 9V7h3v2"/></svg></button>
      <i class="ch l"></i><span class="track"><i class="thumbh"></i></span><i class="ch r"></i><i class="grip"></i>
    </div>
  </section>

  <aside class="browser">
    <h2>Project Browser - Final <button class="x" aria-label="Close browser"><svg viewBox="0 0 8 8"><path d="M1 1l6 6M7 1L1 7"/></svg></button></h2>
    <div class="bbody">
      <div class="clip">
      <ul class="tree">
        <li class="a"><i class="box"></i><svg viewBox="0 0 14 14"><path d="M1 4V1h3M10 1h3v3M13 10v3h-3M4 13H1v-3M5 4h5v5l-2 1H4V5z" stroke="#333"/></svg>Views (all)</li>
        <li class="b"><i class="box"></i>Structural Plans</li>
        <li>00-Foundation</li><li>01-Basement 01</li><li><b>02-Basement 02</b></li><li>03-Ground</li><li>04-Mall</li><li>05-LVL 01</li><li>06-LVL 02</li><li>07-LVL 03</li><li>08-LVL 04</li><li>09-LVL 05</li><li>10-LVL 06</li><li>11-LVL 07</li><li>12-LVL 08</li><li>13-LVL 09</li><li>14-LVL 10</li><li>15-LVL 11</li><li>16-LVL 12</li><li>17-Transfer Floor</li><li>19-ST 02</li><li>20-ST 03</li><li>21-ST 04</li><li>22-Roof</li><li><mark>Level 2 - Analytical</mark></li><li>Site</li>
        <li class="b"><i class="box"></i>3D Views</li><li>Analytical Model</li><li>{3D}</li>
        <li class="b"><i class="box"></i>Elevations (Building Elevatic</li><li class="e">East</li><li class="e">North</li><li class="e">South</li><li class="e">West</li>
        <li class="a leg"><svg viewBox="0 0 14 14"><path d="M1 2h12v10H1z" fill="#fff"/><path d="M1 3h12" stroke-width="3"/><path d="M3 7h3v1H3zM8 7h3M3 10h3M8 10h3"/></svg>Legends</li>
      </ul>
      </div>
      <div class="vs"><i class="ch u"></i><i class="thumbv t3"></i><i class="ch d"></i></div>
    </div>
    <div class="hs"><i class="ch l"></i><i class="thumbh2"></i><i class="ch r"></i></div>
  </aside>
</main>

<footer class="status">
  <span class="ready">Ready</span>
  <div class="mid">
    <svg class="dimi" viewBox="0 0 16 16"><path d="M2 8h4v6H2zM8 9h3v5H8zM6 3h4v4H6zM12 4v9M10 6l2-3 2 3" stroke-width="1.500"/></svg>
    <select aria-label="Workset"><option></option></select>
    <svg class="dimi er" viewBox="0 0 16 16"><path d="M5 3h8l-1 4H7l-3 7H2z" fill="#bbb"/></svg><span>:0</span>
    <svg class="wo" viewBox="0 0 16 16"><path d="M2 2h12v12H2z" fill="#fff" stroke="#333"/><path d="M2 4h12" stroke="#333" stroke-width="2"/><path d="M5 7v6M5 8h2M5 11h2M8 8h4M8 11h4" stroke="#333"/></svg>
    <svg class="dimi" viewBox="0 0 16 16"><path d="M6 2h8v12H9z" fill="#999" stroke="none"/><path d="M2 12h4V7M4 9l2-3 3 3" stroke-width="2"/></svg>
    <select aria-label="Design option" class="offs"><option>Main Model</option></select>
  </div>
  <div class="right">
    <button class="c" aria-label="Select links"><svg viewBox="0 0 16 16"><path d="M2 3h5v3H2zM8 3h5v3H8zM5 4.500h6" stroke="#d8a010" stroke-width="1.500"/><path d="M8 5v9l2-2 2 3 1-1-1-3h3z" fill="#fff"/></svg></button>
    <button class="c" aria-label="Select underlay"><svg viewBox="0 0 16 16"><path d="M2 11L8 3M2 11h7M4 8h5" stroke="#2c5f9e"/><path d="M9 2l5 5M14 2L9 7" stroke="#d22" stroke-width="2"/><path d="M8 6v8l2-2 2 3 1-1-1-3h2z" fill="#fff"/></svg></button>
    <button class="c" aria-label="Select pinned"><svg viewBox="0 0 16 16"><path d="M3 3h5v3H3zM2 8h6M5 8v5" stroke="#c8502a" stroke-width="1.500"/><path d="M9 2l5 5M14 2L9 7" stroke="#d22" stroke-width="2"/><path d="M8 6v8l2-2 2 3 1-1-1-3h2z" fill="#fff"/></svg></button>
    <button class="c" aria-label="Select by face"><svg viewBox="0 0 16 16"><path d="M3 4l6-2v9l-6 2z" fill="#cfe6f8" stroke="#2c72ad"/><path d="M9 5v9l2-2 2 3 1-1-1-3h2z" fill="#fff"/></svg></button>
    <button class="c" aria-label="Drag elements"><svg viewBox="0 0 16 16"><path d="M6 1v9M1 5.500h10M4.500 2.500L6 1l1.500 1.500M2.500 4L1 5.500 2.500 7" stroke="#222" stroke-width="1.500"/><path d="M9 6v8l2-2 2 3 1-1-1-3h2z" fill="#fff"/></svg></button>
    <button class="c dim" aria-label="Background processes"><svg viewBox="0 0 16 16"><circle cx="8" cy="8" r="5" stroke-width="2.500" stroke-dasharray="3 1"/></svg></button>
    <button class="c" aria-label="Filter"><svg viewBox="0 0 16 16"><path d="M2 3h12L9.500 8v5L6.500 14V8z" fill="#dfe3ea" stroke="#556"/></svg></button><span>:0</span>
  </div>
</footer>
</div>
</body>
</html>
```
FILE: styles.css
```css
* { box-sizing: border-box; }
body { margin: 0; background: #000; color: #333; font: 9px/12px "Open Sans", "Noto Sans", sans-serif; }
button, input, select { font: inherit; color: inherit; margin: 0; padding: 0; border: 0; background: none; border-radius: 0; }
button { display: flex; align-items: center; justify-content: center; flex: none; white-space: nowrap; }
svg { flex: none; width: 15px; height: 15px; fill: none; stroke: #4a4a4a; stroke-width: 1; }
.dim svg, .dimi { stroke: #aaa; }
.app { min-height: 100vh; padding: 16px 0; display: flex; flex-direction: column; }

.arr { flex: none; width: 10px; height: 10px; display: grid; place-items: center; }
.arr::before { content: ""; border: 2px solid transparent; border-top: 3px solid #444; border-bottom: 0; }
.arr.up::before { border-top: 0; border-bottom: 3px solid #444; }
.arr.bar::after { content: ""; width: 6px; height: 1px; background: #444; grid-row: 1; }
.sep { flex: none; width: 5px; }

/* Title bar */
.titlebar { display: flex; align-items: center; height: 22px; background: #d4d4d4; }
.logo { width: 12px; height: 14px; margin: 0 8px 0 4px; stroke: none; }
.qat, .info, .right, .winbtns { display: flex; align-items: center; }
.qat { width: 374px; }
.c { width: 19px; height: 20px; }
.c svg { width: 15px; height: 15px; }
.doc { flex: 1; display: flex; justify-content: center; gap: 14px; white-space: nowrap; color: #444; }
.info { padding-right: 2px; }
.play { border: 3px solid transparent; border-left: 5px solid #333; border-right: 0; margin-right: 5px; }
.search { width: 144px; height: 17px; padding: 0 3px; background: #fff; border: 1px solid #333; font-style: italic; }
.search::placeholder { color: #777; opacity: 1; }
.name { margin: 0 18px 0 1px; }
.cart { margin: 0 3px 0 2px; }
.winbtns { margin-left: 13px; }

/* Ribbon tabs */
.tabs { display: flex; height: 16px; background: #d4d4d4; padding-left: 1px; color: #444; }
.tabs button { padding: 0 8px; }
.tabs .wide { padding: 0 9px; }
.tabs .file { width: 35px; background: #1f75b5; color: #fff; margin-right: 2px; }
.tabs .active { background: #d5ebe6; color: #333; margin-left: 2px; }
.tabs .toggle { padding: 0 16px; }
.toggle svg { width: 14px; height: 8px; }

/* Ribbon */
.ribbon { display: flex; height: 77px; background: #d5ebe6; }
.panel { flex: none; display: flex; flex-direction: column; background: #f6f6f7; border-right: 1px solid #ececee; padding-top: 3px; }
.panel .body { height: 57px; display: flex; }
.cap { flex: 1; display: flex; align-items: center; justify-content: center; color: #444; }
.ctx .cap { background: #d5ebe6; }
.two { flex-direction: column; align-items: center; }
.big { height: 28px; width: 31px; }
.i24 { width: 24px; height: 24px; }
.tall { flex-direction: column; justify-content: flex-start; padding-top: 3px; line-height: 12px; }
.tall svg { margin-bottom: 4px; }
.on { background: #bfdff6; border: 1px solid #6aa7d8; }
.col { display: grid; grid-template-rows: repeat(3, 19px); }
.s { width: 20px; height: 19px; }
.s svg, .cmd svg { width: 15px; height: 15px; }
.s .arr { margin-right: -10px; }
.cmd button { justify-content: flex-start; gap: 3px; }
.p-select { width: 46px; }
.p-select .body { padding-left: 6px; }
.p-select .tall { width: 36px; }
.p-prop { width: 52px; }
.p-clip { width: 64px; }
.p-clip .body { padding-left: 5px; }
.p-clip .tall { width: 33px; }
.p-clip .col { padding-left: 4px; }
.p-geo { width: 111px; }
.p-geo .body { padding-left: 4px; }
.p-geo .cmd { width: 53px; }
.p-mod { width: 192px; }
.p-mod .body { padding-left: 1px; gap: 1px; }
.grid4 { display: grid; grid-template-columns: repeat(4, 31px); grid-template-rows: 28px 28px; }
.grid3 { display: grid; grid-template-columns: repeat(3, 20px); grid-template-rows: repeat(3, 19px); }
.p-view { width: 49px; }
.w28 { width: 28px; }
.p-meas { width: 48px; }
.p-meas .big { width: 46px; gap: 3px; padding-left: 3px; }
.p-create { width: 64px; }
.panel .grid2 { display: grid; grid-template-columns: 31px 31px; }
.p-mode { width: 38px; margin-left: 1px; }
.p-draw { width: 190px; }
.p-draw .cmd { width: 86px; padding-left: 3px; }
.gallery { display: grid; grid-template-columns: repeat(5, 18px); grid-template-rows: repeat(3, 18px); border: 1px solid #c8c8c8; align-items: center; }
.gallery svg { width: 15px; height: 15px; }
.spin { display: grid; grid-template-rows: repeat(3, 19px); width: 10px; background: #ececec; }
.spin button { border: 1px solid #ccc; }
.p-work { width: 128px; }
.p-work .tall { width: 31px; }
.options { height: 21px; background: linear-gradient(90deg, #d6ebe4 16px, #e4edd9 16px); border-top: 1px solid #e2e2e2; }

/* Workspace */
.work { flex: 1; display: flex; min-height: 0; background: #eee; }
aside h2 { margin: 0; font: inherit; color: #222; height: 15px; padding: 0 4px 0 2px; display: flex; justify-content: space-between; align-items: center; background: #bdcbdb; }
.x svg { width: 8px; height: 8px; stroke: #111; stroke-width: 1.5; }
.props { width: 177px; display: flex; flex-direction: column; background: #f0f0f0; border-left: 2px solid #9a9a9a; margin-right: 3px; }
.ptype { height: 60px; display: flex; align-items: center; color: #a8a8a8; border: 1px solid #ddd; border-top: 1px solid #777; }
.ptype .thumb { width: 54px; height: 56px; display: grid; place-items: center; border-right: 1px solid #ddd; margin-right: 3px; }
.thumb svg { width: 26px; height: 26px; }
.ptype .arr { margin-left: auto; opacity: .5; }
.inst { height: 20px; display: flex; justify-content: space-between; align-items: center; padding-right: 7px; color: #222; }
select { appearance: none; background: #fff url("data:image/svg+xml,%3Csvg xmlns='http://www.w3.org/2000/svg' width='7' height='5'%3E%3Cpath d='M.5 1l3 3 3-3' fill='none' stroke='%23666'/%3E%3C/svg%3E") no-repeat right 3px center; }
.inst select { width: 107px; height: 17px; padding-left: 2px; background-color: #e3e3e3; border: 1px solid #aaa; }
.inst button { gap: 2px; }
.inst svg { width: 14px; height: 14px; }
.pbody { flex: 1; display: flex; min-height: 0; }
.pbody table { flex: none; width: 159px; height: 100%; border-collapse: collapse; table-layout: fixed; background: #fff; color: #222; }
.c1 { width: 75px; }
.c2 { width: 74px; }
.c3 { width: 10px; }
.pbody td, .pbody th { padding: 0 0 0 2px; border: 1px dotted #b5b5b5; font-weight: normal; text-align: left; white-space: nowrap; line-height: 11px; }
.pbody td:first-child { padding-left: 6px; border-left: 0; }
.pbody td:nth-child(2) { padding-left: 1px; }
.pbody tr.h th { background: #dcdcdc; border: 0; padding-left: 1px; }
.pbody th b { float: right; width: 5px; height: 8px; margin: 2px 5px 0 0; position: relative; }
.pbody th b::before, .pbody th b::after { content: ""; position: absolute; left: 0; top: 1px; width: 4px; height: 4px; border: 1px solid #111; border-width: 1px 0 0 1px; transform: rotate(45deg); }
.pbody th b::after { top: 4px; }
.pbody .off td { color: #8a8a8a; }
.pbody td.box { border: 1px solid #333; padding-left: 4px; }
.pbody td button { width: 100%; height: 11px; background: #e1e1e1; border: 1px solid #aaa; }
.pbody input { appearance: none; display: block; width: 11px; height: 11px; background: #fff; border: 1px solid #444; }
.vs { flex: 1; display: flex; flex-direction: column; align-items: center; background: #f0f0f0; }
.vs.wide { flex: none; width: 13px; }
.thumbv { width: 12px; background: #c6c6c6; }
.ch { flex: none; width: 13px; height: 14px; display: grid; place-items: center; }
.ch::before { content: ""; width: 5px; height: 5px; border: 1px solid #333; border-width: 1px 0 0 1px; transform: rotate(45deg); }
.ch.d::before { transform: rotate(225deg); }
.ch.l::before { transform: rotate(-45deg); }
.ch.r::before { transform: rotate(135deg); }
.ch.d { margin-top: auto; }
.t1 { height: 65%; }
.t2 { height: 14px; margin-top: 236px; }
.t3 { height: 81%; }
.pfoot { height: 20px; display: flex; justify-content: space-between; align-items: center; padding: 0 4px 2px 1px; }
.pfoot a { color: #2b62b5; }
.pfoot button { width: 59px; height: 17px; background: #ccc; color: #8a8a8a; }

/* Drawing view */
.canvas { flex: 1; min-width: 0; display: flex; flex-direction: column; border-left: 1px solid #777; border-top: 2px solid #8a8a8a; margin-right: 5px; }
.stage { flex: 1; display: flex; min-height: 0; }
.view { flex: 1; position: relative; background: #fff; min-width: 0; overflow: hidden; }
.plan { position: absolute; inset: 0; width: 100%; height: 100%; display: block; stroke: none; }
.w1 { stroke: #333; stroke-width: 5; }
.w2 { stroke: #b5adab; stroke-width: 2.500; }
.cols { fill: #d0c6c4; stroke: #222; }
.axis { stroke: #111; stroke-dasharray: 17 4 4 3.700; }
.thin { stroke: #223; }
.bubbles { stroke: #222; }
.nums, .elev text { font: 8px "Liberation Sans", Arial, sans-serif; fill: #111; stroke: none; text-anchor: middle; }
.nums { stroke: #fff; stroke-width: 2; paint-order: stroke; }
.elev { stroke: #111; }
.elev text { font-size: 5px; }
.mdi { position: absolute; right: 0; top: 5px; display: flex; gap: 2px; margin-right: 2px; }
.mdi svg { width: 12px; height: 12px; }
.nav { position: absolute; right: 1px; top: 22px; width: 28px; height: 94px; border: 1px solid #bbb; border-radius: 4px; background: #f4f4f4; }
.nav svg { width: 26px; height: 92px; }
.nav text { font: bold 7px "Open Sans", sans-serif; fill: #7d8ec0; stroke: none; }
.nav path[fill] { stroke: none; }
.viewbar { display: flex; align-items: center; height: 15px; background: #efefef; color: #222; }
.scale { width: 61px; padding-left: 19px; }
.v { width: 17px; height: 14px; }
.v svg { width: 14px; height: 14px; }
.track { flex: 1; display: flex; justify-content: center; height: 12px; }
.thumbh { width: 14px; height: 12px; background: #c6c6c6; }
.grip { width: 15px; }

/* Project browser */
.browser { width: 169px; display: flex; flex-direction: column; background: #f0f0f0; border-left: 1px solid #777; }
.browser h2 { background: #bfcadf; }
.bbody { flex: 1; display: flex; min-height: 0; border-top: 1px solid #666; }
.clip { width: 155px; background: #fff; overflow: hidden; }
.tree { list-style: none; margin: 0; padding: 1px 0 0; height: calc(100% + 4px); display: flex; flex-direction: column; }
.tree li { --v: repeating-linear-gradient(#aaa 0 1px, transparent 1px 2px); --h: repeating-linear-gradient(90deg, #aaa 0 1px, transparent 1px 2px); flex: 1; min-height: 0; display: flex; align-items: center; padding-left: 53px; white-space: nowrap; line-height: 12px; color: #333; background: var(--v) 7px 0 / 1px 100% no-repeat, var(--v) 23px 0 / 1px 100% no-repeat, var(--v) 39px 0 / 1px 100% no-repeat, var(--h) 40px 50% / 11px 1px no-repeat; }
.tree li.b { padding-left: 19px; background: var(--v) 7px 0 / 1px 100% no-repeat, var(--v) 23px 0 / 1px 100% no-repeat, var(--h) 28px 50% / 8px 1px no-repeat; }
.tree li.e { background: var(--v) 7px 0 / 1px 100% no-repeat, var(--v) 39px 0 / 1px 100% no-repeat, var(--h) 40px 50% / 11px 1px no-repeat; }
.tree li.a { padding-left: 3px; background: none; }
.tree li.leg { padding-left: 13px; }
.tree svg { width: 12px; height: 12px; margin: 0 6px 0 5px; }
.tree .box { flex: none; width: 8px; height: 8px; border: 1px solid #999; background: linear-gradient(#333, #333) center / 4px 1px no-repeat #fff; }
.tree .b .box { margin-right: 10px; }
mark { background: #dedede; color: inherit; padding: 1px 2px; margin-left: -2px; }
.hs { height: 15px; display: flex; align-items: center; }
.thumbh2 { flex: none; width: 116px; height: 12px; background: #c6c6c6; }
.hs .r { margin-left: auto; margin-right: 12px; }

/* Status bar */
.status { display: flex; align-items: center; height: 20px; background: #d2d2d2; border-top: 1px solid #999; color: #222; }
.ready { width: 466px; padding-left: 2px; }
.mid { flex: 1; display: flex; align-items: center; gap: 6px; }
.mid svg { width: 14px; height: 14px; }
.mid select { width: 163px; height: 15px; padding-left: 2px; color: #8a8a8a; }
.mid .er { margin-left: 4px; margin-right: -4px; }
.mid .wo { margin-left: 10px; }
.right { gap: 2px; padding-right: 52px; }
.right span { margin-left: -5px; }
```
